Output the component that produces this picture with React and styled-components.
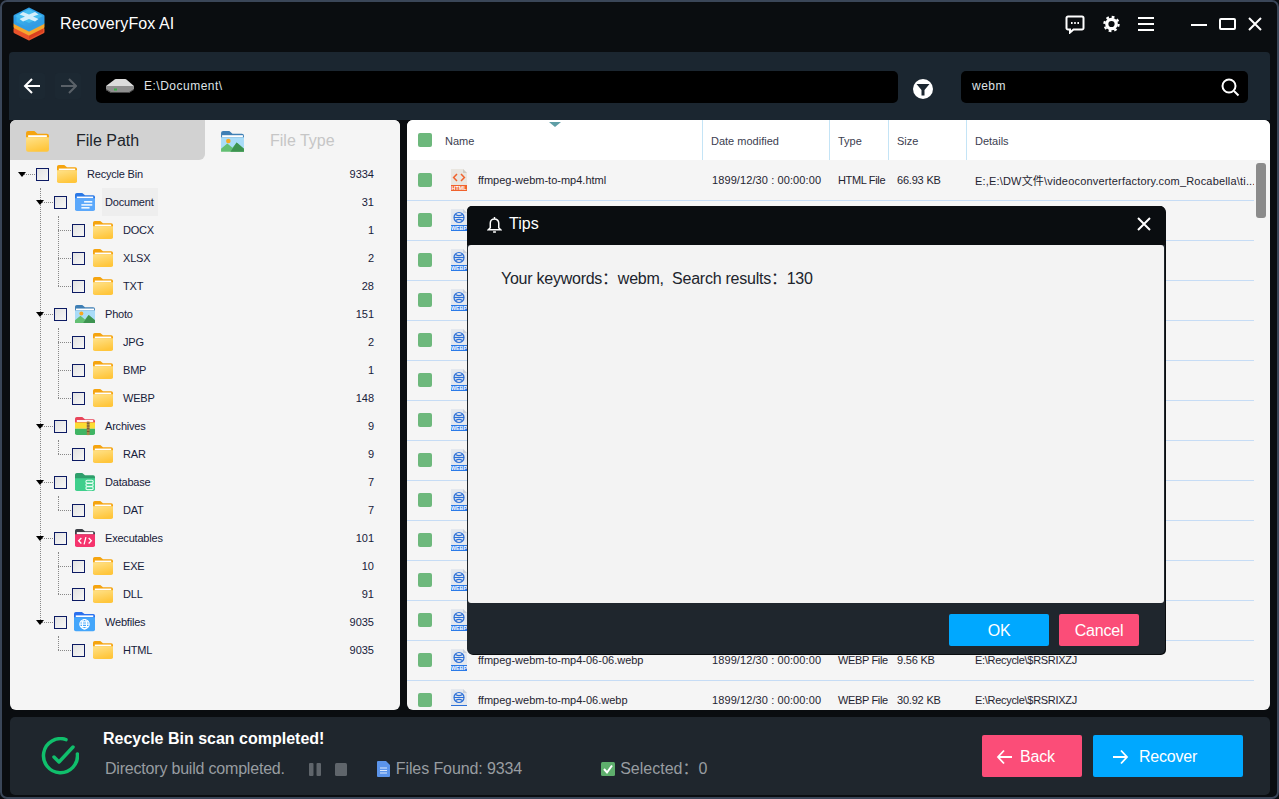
import React from "react";
import styled, { createGlobalStyle } from "styled-components";

const Global = createGlobalStyle`
  html, body { margin: 0; padding: 0; background: #0a0d10; }
  * { box-sizing: border-box; }
  body { font-family: "Liberation Sans", "Noto Sans CJK SC", sans-serif; }
`;

const Frame = styled.div`
  position: relative;
  width: 1279px;
  height: 799px;
  display: flex;
  flex-direction: column;
  background: #0a0d10;
  border: 2px solid #3a4658;
  border-radius: 7px;
  overflow: hidden;
`;

const TitleBar = styled.div`
  height: 50px;
  flex: none;
  display: flex;
  align-items: center;
  padding: 0 15px 6px 10px;
  color: #fff;
`;

const AppName = styled.div`
  margin-left: 14px;
  font-size: 16px;
  letter-spacing: 0.1px;
  flex: 1;
`;

const BarIcons = styled.div`
  display: flex;
  align-items: center;
  gap: 18px;
  margin-right: 37px;
  height: 24px;
`;

const WinIcons = styled(BarIcons)`
  gap: 12px;
  margin-right: 0;
`;

const Toolbar = styled.div`
  flex: none;
  height: 68px;
  margin: 0 7px;
  padding: 19px 20px 0 10px;
  background: #1b2630;
  display: flex;
  align-items: flex-start;
  border-radius: 4px 4px 0 0;
`;

const NavButton = styled.div`
  width: 26px;
  height: 26px;
  margin-top: 2px;
  margin-left: ${(p) => p.$gap}px;
  display: flex;
  align-items: center;
  justify-content: center;
  background: #1c2832;
  border-radius: 3px;
`;

const InputBox = styled.div`
  height: 32px;
  padding-bottom: 2px;
  background: #000;
  border-radius: 5px;
  display: flex;
  align-items: center;
  color: #dfe3e6;
  font-size: 12px;
  letter-spacing: 0.5px;
  position: relative;
`;

const PathBox = styled(InputBox)`
  width: 802px;
  margin-left: 15px;
  padding-left: 9px;
  gap: 9px;
`;

const SearchBox = styled(InputBox)`
  width: 287px;
  margin-left: 28px;
  padding: 0 8px 2px 11px;
  justify-content: space-between;
`;

const SearchIcon = styled.span`
  display: flex;
  margin-top: 2px;
`;

const FilterButton = styled.div`
  width: 20px;
  height: 20px;
  margin: 8px 0 0 15px;
`;

const Content = styled.div`
  flex: none;
  height: 590px;
  display: flex;
  gap: 7px;
  margin: 0 7px 0 8px;
`;

const LeftPanel = styled.div`
  width: 390px;
  background: #f5f5f5;
  border-radius: 6px;
  overflow: hidden;
`;

const Tabs = styled.div`
  height: 40px;
  display: flex;
`;

const Tab = styled.div`
  width: 195px;
  display: flex;
  align-items: center;
  padding: 2px 0 0 15px;
  background: ${(p) => (p.$active ? "#d2d2d2" : "#f5f5f5")};
  color: ${(p) => (p.$active ? "#20242a" : "#c6c6c6")};
  border-radius: 0 0 ${(p) => (p.$active ? 6 : 0)}px 0;
  font-size: 16px;
`;

const TabLabel = styled.span`
  margin-left: ${(p) => p.$left}px;
`;

const Tree = styled.div`
  padding-bottom: 10px;
`;

const Branch = styled.div`
  position: relative;
  &::before {
    content: "";
    position: absolute;
    left: ${(p) => p.$x}px;
    top: ${(p) => p.$top}px;
    bottom: ${(p) => p.$bottom}px;
    border-left: 1px dotted #888;
  }
`;

const TreeRow = styled.div`
  position: relative;
  height: 28px;
  display: flex;
  align-items: center;
  padding-left: ${(p) => 26 + p.$level * 18}px;
  padding-right: 26px;
  font-size: 11px;
  color: #17213a;
  &::after {
    content: "";
    position: absolute;
    left: ${(p) => 12 + p.$level * 18}px;
    width: 13px;
    top: 14px;
    border-top: 1px dotted #888;
  }
`;

const Arrow = styled.span`
  position: absolute;
  z-index: 1;
  left: ${(p) => 8 + p.$level * 18}px;
  top: 12px;
  border-style: solid;
  border-width: 5px 4.5px 0 4.5px;
  border-color: #000 transparent transparent transparent;
`;

const Check = styled.span`
  width: 13px;
  height: 13px;
  flex: none;
  border: 1px solid #0c1a63;
  background: linear-gradient(135deg, #e2e2e2, #f6f6f6);
`;

const RowIcon = styled.span`
  width: 22px;
  height: 20px;
  margin-left: 7px;
  flex: none;
  display: flex;
`;

const RowLabel = styled.span`
  margin-left: 6px;
  padding: 0 4px 0 3px;
  height: 28px;
  line-height: 28px;
  letter-spacing: -0.2px;
  background: ${(p) => (p.$hover ? "#eeeeee" : "transparent")};
`;

const RowCount = styled.span`
  margin-left: auto;
`;

const RightPanel = styled.div`
  position: relative;
  flex: 1;
  background: #f5f5f5;
  border-radius: 6px;
  overflow: hidden;
`;

const cols = "38px 257px 127px 59px 78px 1fr";

const ListHead = styled.div`
  height: 40px;
  display: grid;
  grid-template-columns: ${cols};
  background: #fff;
  font-size: 11px;
  color: #3b4050;
`;

const HeadCell = styled.div`
  display: flex;
  align-items: center;
  padding-top: 2px;
  padding-left: ${(p) => (p.$first ? 0 : 8)}px;
  border-left: ${(p) => (p.$first ? "none" : "1px solid #c4e4f6")};
`;

const SortMark = styled.span`
  position: absolute;
  left: 142px;
  top: 2px;
  border-style: solid;
  border-width: 5px 6px 0 6px;
  border-color: #5f9ea6 transparent transparent transparent;
`;

const BoxCell = styled.div`
  display: flex;
  align-items: center;
  padding-left: 11px;
`;

const GreenBox = styled.span`
  width: 14px;
  height: 14px;
  background: #6db87c;
  border-radius: 2px;
`;

const ListRow = styled.div`
  height: 40px;
  margin-right: 16px;
  display: grid;
  grid-template-columns: ${cols};
  box-shadow: 0 1px 0 #c6dcf5;
  font-size: 11px;
  color: #1f2430;
`;

const Cell = styled.div`
  display: flex;
  align-items: center;
  padding-left: ${(p) => p.$pad}px;
  letter-spacing: ${(p) => p.$track || 0}px;
  white-space: nowrap;
  overflow: hidden;
`;

const NameText = styled.span`
  margin-left: 10px;
`;

const ScrollThumb = styled.div`
  position: absolute;
  right: 4px;
  top: 43px;
  width: 10px;
  height: 55px;
  background: #8b8b8b;
  border-radius: 3px;
`;

const StatusBar = styled.div`
  flex: none;
  height: 78px;
  margin: 7px 7px 0 8px;
  padding: 0 27px 0 31px;
  background: #1f262d;
  border-radius: 5px;
  display: flex;
  align-items: center;
`;

const StatusInfo = styled.div`
  margin-left: 24px;
  flex: 1;
  align-self: flex-start;
  padding-top: 13px;
`;

const StatusTitle = styled.div`
  color: #fff;
  font-size: 16px;
  font-weight: bold;
  line-height: 18px;
`;

const StatusLine = styled.div`
  display: flex;
  align-items: center;
  margin-top: 11px;
  padding-left: 2px;
  height: 20px;
  color: #989da1;
  font-size: 16px;
  line-height: 20px;
  letter-spacing: -0.2px;
`;

const Spaced = styled.span`
  display: inline-flex;
  align-items: center;
  margin-left: ${(p) => p.$left}px;
  letter-spacing: ${(p) => p.$track ?? -0.2}px;
`;

const ActionButton = styled.div`
  width: ${(p) => p.$w}px;
  height: ${(p) => p.$h}px;
  background: ${(p) => (p.$kind === "pink" ? "#fb4d78" : "#00a8ff")};
  border-radius: 2px;
  color: #fff;
  font-size: 16px;
  letter-spacing: -0.2px;
  display: flex;
  align-items: center;
  justify-content: ${(p) => (p.$left ? "flex-start" : "center")};
  padding: 2px 0 0 ${(p) => p.$left || 0}px;
  gap: 6px;
  margin-left: ${(p) => p.$gap || 0}px;
`;

const Dialog = styled.div`
  position: absolute;
  left: 465px;
  top: 204px;
  width: 698px;
  height: 448px;
  background: #1f262d;
  border-radius: 5px;
  box-shadow: 1px 1px 0 #0a0d10;
  display: flex;
  flex-direction: column;
  overflow: hidden;
`;

const DialogHead = styled.div`
  height: 39px;
  flex: none;
  background: #0a0d10;
  color: #fff;
  font-size: 16px;
  display: flex;
  align-items: center;
  padding: 0 14px 3px 20px;
  gap: 7px;
`;

const DialogBody = styled.div`
  height: 358px;
  flex: none;
  margin: 0 1px;
  padding: 25px 33px;
  background: #f3f3f3;
  border-radius: 3px;
  color: #20242c;
  font-size: 16px;
  line-height: 18px;
  letter-spacing: -0.25px;
  white-space: pre;
`;

const DialogFoot = styled.div`
  flex: 1;
  display: flex;
  justify-content: flex-end;
  padding: 11px 26px 0 0;
  gap: 10px;
`;

const Spacer = styled.div`
  flex: 1;
`;

const YellowFolder = ({ w = 22 }) => (
  <svg width={w} viewBox="0 0 24 22">
    <defs>
      <linearGradient id="yf" x1="0" y1="0" x2="0.4" y2="1">
        <stop offset="0" stopColor="#ffe28a" />
        <stop offset="1" stopColor="#ffc63c" />
      </linearGradient>
    </defs>
    <path d="M1 3a2 2 0 0 1 2-2h6l3 2.5h9a2 2 0 0 1 2 2V9H1z" fill="#f5a40f" />
    <rect x="3" y="5" width="18" height="2" fill="#fff" />
    <path d="M1 7h22v12a2 2 0 0 1-2 2H3a2 2 0 0 1-2-2z" fill="url(#yf)" />
  </svg>
);

const DocFolder = () => (
  <svg width="22" viewBox="0 0 24 22">
    <path d="M1 3a2 2 0 0 1 2-2h6l3 2.5h9a2 2 0 0 1 2 2V9H1z" fill="#2a78e6" />
    <rect x="3" y="5" width="18" height="2" fill="#fff" />
    <path d="M1 7h22v12a2 2 0 0 1-2 2H3a2 2 0 0 1-2-2z" fill="#5ba8fb" />
    <rect x="11" y="10" width="9" height="1.6" fill="#fff" />
    <rect x="8" y="13.4" width="12" height="1.6" fill="#fff" />
    <rect x="8" y="16.6" width="9" height="1.6" fill="#fff" />
  </svg>
);

const PhotoFolder = ({ w = 22 }) => (
  <svg width={w} viewBox="0 0 24 22">
    <path d="M1 3a2 2 0 0 1 2-2h6l3 2.5h9a2 2 0 0 1 2 2V8H1z" fill="#3f7fb5" />
    <rect x="2" y="5" width="20" height="2" fill="#fff" />
    <rect x="1" y="7" width="22" height="13" fill="#a9dcf8" />
    <circle cx="8" cy="10.500" r="2.200" fill="#f7a823" />
    <path d="M1 21v-3l6-5 5 4 4-5 7 6v3z" fill="#63bf73" />
    <path d="M10 21l6-9 7 6v3z" fill="#3d9350" />
  </svg>
);

const ArchiveFolder = () => (
  <svg width="22" viewBox="0 0 24 22">
    <path d="M1 3a2 2 0 0 1 2-2h6l3 2.5h9a2 2 0 0 1 2 2V8H1z" fill="#e8455a" />
    <rect x="3" y="4.500" width="18" height="2" fill="#fff" />
    <rect x="1" y="7" width="22" height="7" fill="#fbdc33" />
    <path d="M1 14h22v5a2 2 0 0 1-2 2H3a2 2 0 0 1-2-2z" fill="#3fb463" />
    <rect x="14" y="6" width="3" height="15" fill="#a98248" />
    <path d="M14 8h3M14 11h3M14 14h3M14 17h3" stroke="#6f5228" strokeWidth="1" />
  </svg>
);

const DbFolder = () => (
  <svg width="22" viewBox="0 0 24 22">
    <path d="M1 3a2 2 0 0 1 2-2h6l3 2.500h9a2 2 0 0 1 2 2V9H1z" fill="#2f9e6b" />
    <path d="M1 7h22v12a2 2 0 0 1-2 2H3a2 2 0 0 1-2-2z" fill="#3fcf8c" />
    <g fill="none" stroke="#e6fff2" strokeWidth="1.200">
      <rect x="13" y="9" width="8" height="3.200" rx="1.500" />
      <rect x="13" y="12.600" width="8" height="3.200" rx="1.500" />
      <rect x="13" y="16.200" width="8" height="3.200" rx="1.500" />
    </g>
  </svg>
);

const ExeFolder = () => (
  <svg width="22" viewBox="0 0 24 22">
    <path d="M1 3a2 2 0 0 1 2-2h6l3 2.500h9a2 2 0 0 1 2 2V9H1z" fill="#3d4046" />
    <rect x="3" y="4.500" width="18" height="2.500" fill="#fff" />
    <path d="M1 7h22v12a2 2 0 0 1-2 2H3a2 2 0 0 1-2-2z" fill="#f5346d" />
    <path d="M8 11l-3 3 3 3M16 11l3 3-3 3M13 10l-2 8" fill="none" stroke="#fff" strokeWidth="1.400" />
  </svg>
);

const WebFolder = () => (
  <svg width="26" viewBox="0 0 26 24" style={{ marginLeft: -1, marginTop: -1 }}>
    <path d="M1 3a2 2 0 0 1 2-2h7l3 2.500h10a2 2 0 0 1 2 2V9H1z" fill="#2a70ee" />
    <rect x="3" y="5" width="20" height="2" fill="#fff" />
    <path d="M1 7h24v14a2 2 0 0 1-2 2H3a2 2 0 0 1-2-2z" fill="#44a6fb" />
    <g fill="none" stroke="#fff" strokeWidth="1.200">
      <circle cx="13" cy="15" r="5.400" />
      <ellipse cx="13" cy="15" rx="2.400" ry="5.400" />
      <path d="M7.600 15h10.800M8.500 12.400h9M8.500 17.600h9" />
    </g>
  </svg>
);

const HtmlIcon = () => (
  <svg width="18" height="22" viewBox="0 0 18 22">
    <path d="M1 0h12l4 4v12H1z" fill="#e9e6e0" />
    <path d="M13 0l4 4h-4z" fill="#cfcbc2" />
    <path d="M7 5L3.600 8.500 7 12M11 5l3.400 3.500L11 12" fill="none" stroke="#f0622c" strokeWidth="1.500" />
    <rect x="1" y="16" width="16" height="6" fill="#f0622c" />
    <text x="9" y="21" textAnchor="middle" fontSize="5.400" fontWeight="bold" fill="#fff" fontFamily="Liberation Sans">HTML</text>
  </svg>
);

const WebpIcon = ({ cut }) => (
  <svg width="18" height="22" viewBox="0 0 18 22">
    <path d="M1 0h12l4 4v12H1z" fill="#e4e8ee" />
    <path d="M13 0l4 4h-4z" fill="#c7cfdb" />
    <g fill="none" stroke="#2a6fd8" strokeWidth="1.200">
      <circle cx="9" cy="8.500" r="5" />
      <path d="M4 8.500h10" />
      <path d="M5.500 5.500q3.500 2.400 7 0M5.500 11.500q3.500-2.400 7 0" />
    </g>
    {cut ? (
      <rect x="1" y="16" width="16" height="1" fill="#2a6fd8" />
    ) : (
      <>
        <rect x="1" y="16" width="16" height="6" fill="#2a7ae8" />
        <text x="9" y="21" textAnchor="middle" fontSize="5.400" fontWeight="bold" fill="#fff" fontFamily="Liberation Sans">WEBP</text>
      </>
    )}
  </svg>
);

const Logo = () => (
  <svg width="34" height="34" viewBox="0 0 34 34">
    <defs>
      <linearGradient id="logoTop" x1="0.2" y1="0" x2="0.8" y2="1">
        <stop offset="0" stopColor="#3fc4f2" />
        <stop offset="1" stopColor="#2f8fe0" />
      </linearGradient>
    </defs>
    <g strokeLinejoin="round" strokeWidth="3">
      <path d="M3 22l14-7 14 7v3l-14 7-14-7z" fill="#e8532b" stroke="#e8532b" />
      <path d="M17 25l14-7v7l-14 7z" fill="#d8401f" />
      <path d="M3 17l14-7 14 7v3l-14 7-14-7z" fill="#f5a62e" stroke="#f5a62e" />
      <path d="M3 9l14-7 14 7v7l-14 7-14-7z" fill="url(#logoTop)" stroke="#2f9ee6" />
      <path d="M3 9l14-7 14 7-14 7z" fill="#45bdf0" />
    </g>
    <path d="M11 5l6 2.500 6-2.500 3.500 2.500-5.500 2 5.500 2.500-3.500 2.500-6-2.500-6 2.500-3.500-2.500 5.500-2.500-5.500-2z" fill="#d4effb" />
  </svg>
);

const Stroke = ({ w = 20, h = 20, vb, sw = 2, color = "#fff", children }) => (
  <svg width={w} height={h} viewBox={vb || `0 0 ${w} ${h}`} fill="none" stroke={color} strokeWidth={sw}>
    {children}
  </svg>
);

const CheckCircle = () => (
  <svg width="38" height="38" viewBox="0 0 38 38" fill="none" stroke="#10bf6c" strokeWidth="3.500" strokeLinecap="round" strokeLinejoin="round">
    <path d="M25 2.600A17 17 0 1 0 36.400 17" />
    <path d="M13 20l5 5L32 10" />
  </svg>
);

const rows = [
  { name: "ffmpeg-webm-to-mp4-01.webp", size: "12.40 KB" },
  { name: "ffmpeg-webm-to-mp4-01.webp", size: "24.18 KB" },
  { name: "ffmpeg-webm-to-mp4-02.webp", size: "10.72 KB" },
  { name: "ffmpeg-webm-to-mp4-02.webp", size: "28.05 KB" },
  { name: "ffmpeg-webm-to-mp4-03.webp", size: "11.36 KB" },
  { name: "ffmpeg-webm-to-mp4-03.webp", size: "27.61 KB" },
  { name: "ffmpeg-webm-to-mp4-04.webp", size: "9.98 KB" },
  { name: "ffmpeg-webm-to-mp4-04.webp", size: "26.47 KB" },
  { name: "ffmpeg-webm-to-mp4-05.webp", size: "10.13 KB" },
  { name: "ffmpeg-webm-to-mp4-05.webp", size: "29.30 KB" },
  { name: "ffmpeg-webm-to-mp4-05-05.webp", size: "8.74 KB" },
  { name: "ffmpeg-webm-to-mp4-06-06.webp", size: "9.56 KB" },
  { name: "ffmpeg-webm-to-mp4-06.webp", size: "30.92 KB", cut: true },
];

const tree = [
  { label: "Document", count: 31, icon: <DocFolder />, hover: true, kids: [["DOCX", 1], ["XLSX", 2], ["TXT", 28]] },
  { label: "Photo", count: 151, icon: <PhotoFolder />, kids: [["JPG", 2], ["BMP", 1], ["WEBP", 148]] },
  { label: "Archives", count: 9, icon: <ArchiveFolder />, kids: [["RAR", 9]] },
  { label: "Database", count: 7, icon: <DbFolder />, kids: [["DAT", 7]] },
  { label: "Executables", count: 101, icon: <ExeFolder />, kids: [["EXE", 10], ["DLL", 91]] },
  { label: "Webfiles", count: 9035, icon: <WebFolder />, kids: [["HTML", 9035]] },
];

const Row = ({ level, icon, label, count, hover, arrow }) => (
  <TreeRow $level={level}>
    {arrow && <Arrow $level={level} />}
    <Check />
    <RowIcon>{icon}</RowIcon>
    <RowLabel $hover={hover}>{label}</RowLabel>
    <RowCount>{count}</RowCount>
  </TreeRow>
);

const FileRow = ({ icon, name, type, size, details, detailTrack }) => (
  <ListRow>
    <BoxCell>
      <GreenBox />
    </BoxCell>
    <Cell $pad={5}>
      {icon}
      <NameText>{name}</NameText>
    </Cell>
    <Cell $pad={10} $track={0.1}>1899/12/30 : 00:00:00</Cell>
    <Cell $pad={9} $track={-0.35}>{type}</Cell>
    <Cell $pad={9} $track={-0.2}>{size}</Cell>
    <Cell $pad={9} $track={detailTrack}>{details}</Cell>
  </ListRow>
);

const App = () => (
  <>
    <Global />
    <Frame lang="zh-CN">
      <TitleBar>
        <Logo />
        <AppName>RecoveryFox AI</AppName>
        <BarIcons>
          <Stroke w={20} h={20}>
            <path d="M3 2.500h14a1.500 1.500 0 0 1 1.500 1.500v10a1.500 1.500 0 0 1-1.500 1.500H8.500L5 18.500v-3H3A1.500 1.500 0 0 1 1.500 14V4A1.500 1.500 0 0 1 3 2.500z" />
            <path d="M6 9h1.600M9.200 9h1.600M12.400 9H14" />
          </Stroke>
          <Stroke w={17} h={18} vb="0 0 18 18">
            <circle cx="9" cy="9" r="5" strokeWidth="3.400" />
            <circle cx="9" cy="9" r="7.500" strokeWidth="2.400" strokeDasharray="2.900 2.990" />
          </Stroke>
          <Stroke w={16} h={16}>
            <path d="M0 2h16M0 8h16M0 14h16" />
          </Stroke>
        </BarIcons>
        <WinIcons>
          <Stroke w={16} h={16}>
            <path d="M0 9h16" />
          </Stroke>
          <Stroke w={17} h={14}>
            <rect x="1" y="2" width="15" height="10" rx="1" />
          </Stroke>
          <Stroke w={14} h={14}>
            <path d="M1 1l12 12M13 1L1 13" />
          </Stroke>
        </WinIcons>
      </TitleBar>

      <Toolbar>
        <NavButton $gap={0}>
          <Stroke w={18} h={18} sw={2}>
            <path d="M17 9H2M9 2L2 9l7 7" />
          </Stroke>
        </NavButton>
        <NavButton $gap={10}>
          <Stroke w={18} h={18} sw={2} vb="-2 0 18 18" color="#5a6168">
            <path d="M0 9h15M8 2l7 7-7 7" />
          </Stroke>
        </NavButton>
        <PathBox>
          <svg width="30" height="16" viewBox="0 0 30 16">
            <path d="M1 8l8-6a3 3 0 0 1 2-1h9a3 3 0 0 1 2 1l7 6z" fill="#dcdcdc" />
            <path d="M1 8h28v3l-5 4H6l-5-3z" fill="#8f8f8f" />
            <path d="M1 11l5 3h18l5-3v1l-5 3H6l-5-3z" fill="#4a4a4a" />
            <rect x="9" y="10.500" width="3" height="2" fill="#3bb24a" />
          </svg>
          E:\Document\
        </PathBox>
        <FilterButton>
          <svg width="20" height="20" viewBox="0 0 20 20">
            <circle cx="10" cy="10" r="10" fill="#fff" />
            <path d="M3.500 5h13l-5 6v5.500h-3V11z" fill="#1b2630" />
          </svg>
        </FilterButton>
        <SearchBox>
          webm
          <SearchIcon>
            <Stroke w={20} h={20} sw={2}>
              <circle cx="9" cy="9" r="6.500" />
              <path d="M14 14l4.500 4.500" />
            </Stroke>
          </SearchIcon>
        </SearchBox>
      </Toolbar>

      <Content>
        <LeftPanel>
          <Tabs>
            <Tab $active>
              <YellowFolder w={25} />
              <TabLabel $left={26}>File Path</TabLabel>
            </Tab>
            <Tab>
              <PhotoFolder w={25} />
              <TabLabel $left={25}>File Type</TabLabel>
            </Tab>
          </Tabs>
          <Tree>
            <Row level={0} arrow icon={<YellowFolder />} label="Recycle Bin" count={9334} />
            <Branch $x={30} $top={0} $bottom={42}>
              {tree.map((group) => (
                <div key={group.label}>
                  <Row level={1} arrow icon={group.icon} label={group.label} count={group.count} hover={group.hover} />
                  <Branch $x={48} $top={0} $bottom={14}>
                    {group.kids.map(([label, count]) => (
                      <Row key={label} level={2} icon={<YellowFolder />} label={label} count={count} />
                    ))}
                  </Branch>
                </div>
              ))}
            </Branch>
          </Tree>
        </LeftPanel>

        <RightPanel>
          <ListHead>
            <BoxCell>
              <GreenBox />
            </BoxCell>
            <HeadCell $first>Name</HeadCell>
            <HeadCell>Date modified</HeadCell>
            <HeadCell>Type</HeadCell>
            <HeadCell>Size</HeadCell>
            <HeadCell>Details</HeadCell>
          </ListHead>
          <SortMark />
          <FileRow
            icon={<HtmlIcon />}
            name="ffmpeg-webm-to-mp4.html"
            type="HTML File"
            size="66.93 KB"
            details="E:,E:\DW文件\videoconverterfactory.com_Rocabella\ti..."
            detailTrack={0.18}
          />
          {rows.map((row, i) => (
            <FileRow
              key={i}
              icon={<WebpIcon cut={row.cut} />}
              name={row.name}
              type="WEBP File"
              size={row.size}
              details="E:\Recycle\$RSRIXZJ"
              detailTrack={-0.3}
            />
          ))}
          <ScrollThumb />
        </RightPanel>
      </Content>

      <StatusBar>
        <CheckCircle />
        <StatusInfo>
          <StatusTitle>Recycle Bin scan completed!</StatusTitle>
          <StatusLine>
            Directory build completed.
            <Spaced $left={24}>
              <svg width="38" height="13" viewBox="0 0 38 13">
                <rect x="0" y="0" width="4.500" height="13" rx="1" fill="#5f656b" />
                <rect x="7.500" y="0" width="4.500" height="13" rx="1" fill="#5f656b" />
                <rect x="26" y="0" width="12" height="13" rx="1.500" fill="#5f656b" />
              </svg>
            </Spaced>
            <Spaced $left={30}>
              <svg width="13" height="16" viewBox="0 0 13 16">
                <path d="M0 1a1 1 0 0 1 1-1h8l4 4v11a1 1 0 0 1-1 1H1a1 1 0 0 1-1-1z" fill="#5b94ea" />
                <path d="M3 7h7M3 9.500h7M3 12h7" stroke="#dbe8fb" strokeWidth="1" />
              </svg>
            </Spaced>
            <Spaced $left={6} $track={-0.1}>Files Found: 9334</Spaced>
            <Spaced $left={79}>
              <svg width="14" height="14" viewBox="0 0 14 14">
                <rect width="14" height="14" rx="1.500" fill="#5eae6c" />
                <path d="M3 7l3 3.500L11 3.500" fill="none" stroke="#fff" strokeWidth="2" />
              </svg>
            </Spaced>
            <Spaced $left={5} $track={0}>Selected：0</Spaced>
          </StatusLine>
        </StatusInfo>
        <ActionButton $kind="pink" $w={100} $h={42} $left={14}>
          <Stroke w={18} h={18} sw={1.800}>
            <path d="M16 9H2M8 2.500L2 9l6 6.500" />
          </Stroke>
          Back
        </ActionButton>
        <ActionButton $kind="blue" $w={150} $h={42} $left={18} $gap={11}>
          <Stroke w={18} h={18} sw={1.800}>
            <path d="M2 9h14M10 2.500L16 9l-6 6.500" />
          </Stroke>
          <TabLabel $left={4}>Recover</TabLabel>
        </ActionButton>
      </StatusBar>
      <Spacer />

      <Dialog>
        <DialogHead>
          <Stroke w={15} h={19} vb="0 0 16 19" sw={1.600}>
            <path d="M8 1.500v1.500M3.500 13V8a4.500 4.500 0 0 1 9 0v5l2 2H1.500zM6.500 17.500h3" />
          </Stroke>
          Tips
          <Spacer />
          <Stroke w={14} h={14}>
            <path d="M1 1l12 12M13 1L1 13" />
          </Stroke>
        </DialogHead>
        <DialogBody>Your keywords：webm,  Search results：130</DialogBody>
        <DialogFoot>
          <ActionButton $kind="blue" $w={100} $h={32}>OK</ActionButton>
          <ActionButton $kind="pink" $w={80} $h={32}>Cancel</ActionButton>
        </DialogFoot>
      </Dialog>
    </Frame>
  </>
);

export default App;
